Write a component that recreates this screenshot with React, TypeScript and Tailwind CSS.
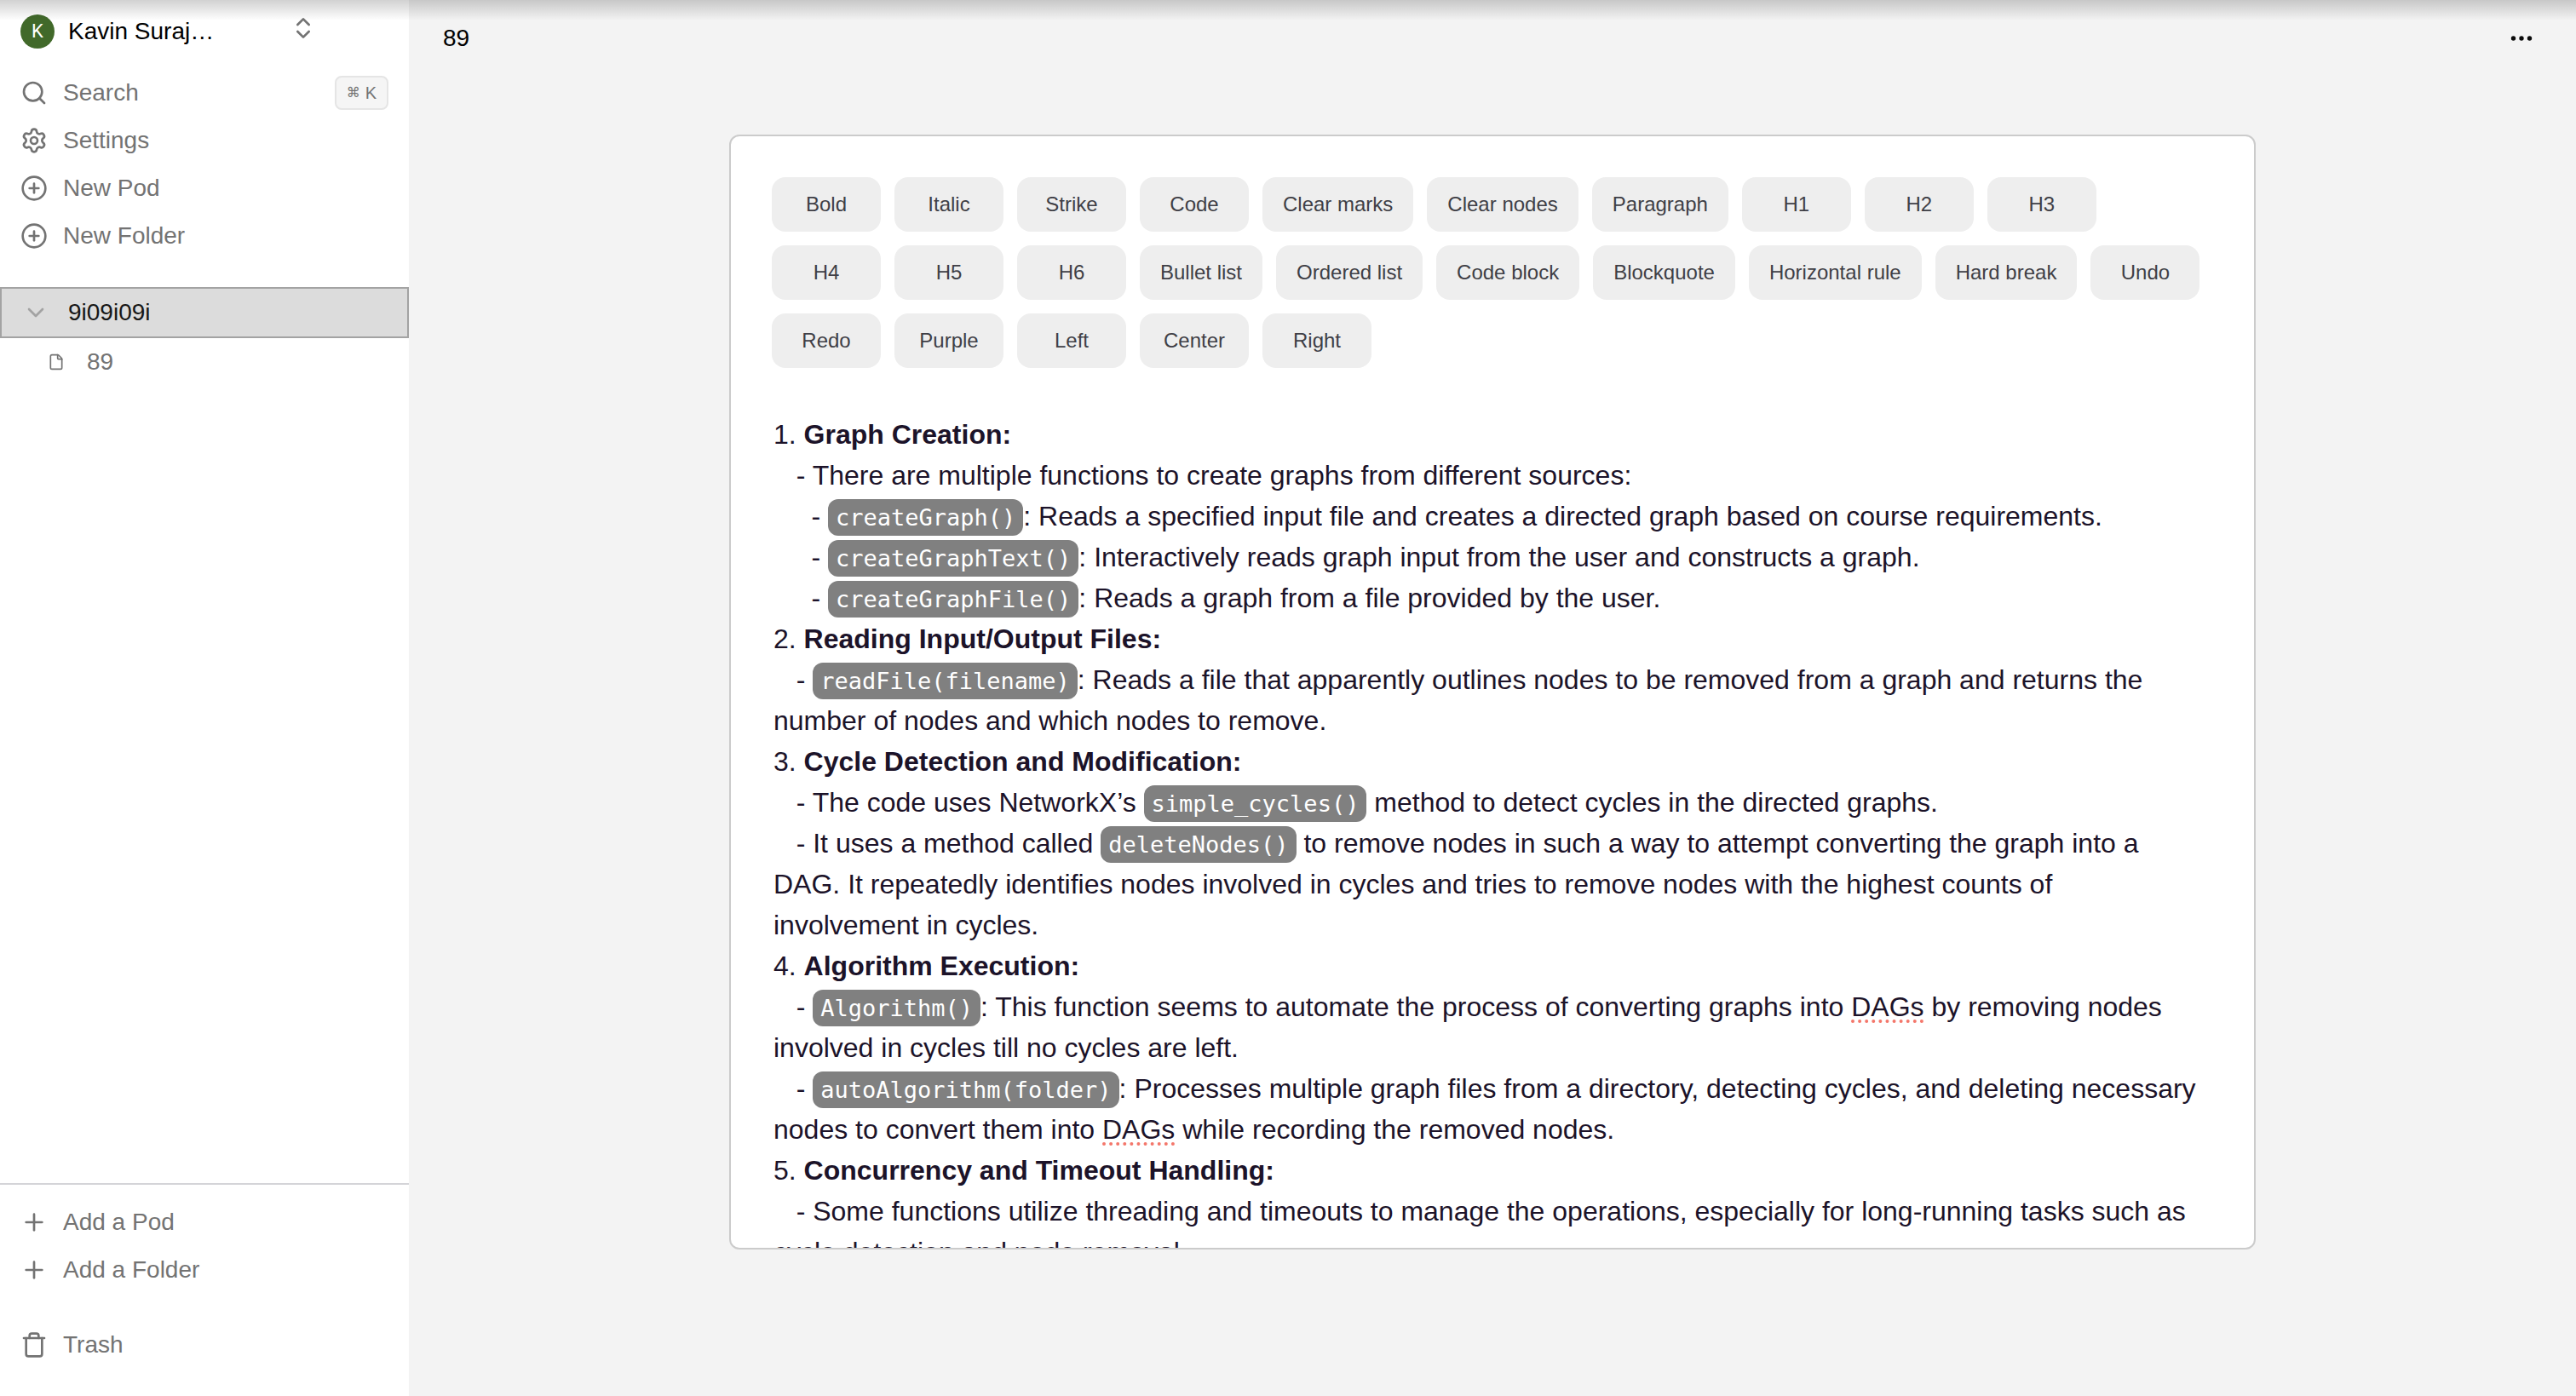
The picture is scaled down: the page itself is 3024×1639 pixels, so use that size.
import type { ReactNode } from "react";
import { CirclePlus, Plus, Search, Settings, Trash, ChevronDown, ChevronsUpDown, File } from "lucide-react";

const tools = ["Bold", "Italic", "Strike", "Code", "Clear marks", "Clear nodes", "Paragraph", "H1", "H2", "H3", "H4", "H5", "H6", "Bullet list", "Ordered list", "Code block", "Blockquote", "Horizontal rule", "Hard break", "Undo", "Redo", "Purple", "Left", "Center", "Right"];

function Item({ icon, label, children }: { icon: ReactNode; label: string; children?: ReactNode }) {
  return (
    <button type="button" className="flex h-14 w-full items-center pl-6 pr-6 text-left text-[#737373]">
      <span className="mr-4 flex w-8 shrink-0 justify-center">{icon}</span>
      <span className="flex-1 pl-0.5">{label}</span>
      {children}
    </button>
  );
}

function Code({ children }: { children: ReactNode }) {
  return (
    <code className="rounded-xl bg-[#808080] px-[9px] py-1.5 font-['DejaVu_Sans_Mono',monospace] text-[27px] leading-none text-white">{children}</code>
  );
}

function Misspelt({ children }: { children: ReactNode }) {
  return (
    <span className="underline decoration-[#f4776b] decoration-dotted decoration-4 underline-offset-4">{children}</span>
  );
}

export default function App() {
  return (
    <div className="relative flex h-screen overflow-hidden bg-[#f3f3f3] font-['Liberation_Sans',Arial,sans-serif] text-[28px] leading-10 text-black">
      <aside className="flex w-[480px] shrink-0 flex-col bg-white">
        <button type="button" className="flex h-[73px] items-center pl-6 text-left">
          <span className="flex size-10 items-center justify-center rounded-full bg-[#41692a] font-[Roboto,sans-serif] text-[22px] text-white">K</span>
          <span className="w-[230px] pl-4">Kavin Suraj…</span>
          <ChevronsUpDown className="mb-2 ml-[46px] size-8 text-[#737373]" strokeWidth={2} />
        </button>
        <nav className="pt-2">
          <Item icon={<Search className="size-8" />} label="Search">
            <kbd className="flex h-10 items-center gap-1.5 rounded-lg border-2 border-[#e5e5e5] bg-[#f5f5f5] px-3 font-['Liberation_Sans',sans-serif] text-[20px]">
              <span className="font-['DejaVu_Sans',sans-serif] text-[16px]">⌘</span>K
            </kbd>
          </Item>
          <Item icon={<Settings className="size-8" />} label="Settings" />
          <Item icon={<CirclePlus className="size-8" />} label="New Pod" />
          <Item icon={<CirclePlus className="size-8" />} label="New Folder" />
        </nav>
        <div className="mt-8">
          <button type="button" className="flex h-[60px] w-full items-center border-2 border-[#a3a3a3] bg-[#dcdcdc] pl-6 text-left text-[#171717]">
            <ChevronDown className="size-8 text-[#a3a3a3]" />
            <span className="pl-[22px]">9i09i09i</span>
          </button>
          <button type="button" className="flex h-14 w-full items-center pl-14 text-left text-[#737373]">
            <File className="size-5" />
            <span className="pl-[26px]">89</span>
          </button>
        </div>
        <div className="mt-auto border-t-2 border-[#d4d4d8] pt-4 pb-8">
          <Item icon={<Plus className="size-8" />} label="Add a Pod" />
          <Item icon={<Plus className="size-8" />} label="Add a Folder" />
          <div className="mt-8">
            <Item icon={<Trash className="size-8" />} label="Trash" />
          </div>
        </div>
      </aside>
      <main className="flex min-w-0 flex-1 flex-col">
        <header className="flex h-[90px] items-center justify-between px-10">
          <h1>89</h1>
          <button type="button" aria-label="More" className="mr-2">
            <svg viewBox="0 0 32 8" className="h-2 w-8 fill-[#0a0a0a]">
              <circle cx="6.5" cy="4" r="2.7" />
              <circle cx="16" cy="4" r="2.7" />
              <circle cx="25.5" cy="4" r="2.7" />
            </svg>
          </button>
        </header>
        <div className="mx-auto mt-17 mb-43 min-h-0 w-full max-w-[1792px] flex-1 overflow-hidden rounded-xl border-2 border-[#cbcbcb] bg-white p-12">
          <div className="flex flex-wrap gap-4">
            {tools.map((t) => (
              <button key={t} type="button" className="h-16 min-w-32 rounded-2xl bg-[#eeeeee] px-6 text-2xl text-[#3f3f46]">{t}</button>
            ))}
          </div>
          <div className="mt-[54px] whitespace-pre-wrap pr-4 pl-0.5 text-[32px] leading-[48px] text-[#1c1329]">
            <p>1. <strong>Graph Creation:</strong></p>
            <p>{"   - There are multiple functions to create graphs from different sources:"}</p>
            <p>{"     - "}<Code>createGraph()</Code>: Reads a specified input file and creates a directed graph based on course requirements.</p>
            <p>{"     - "}<Code>createGraphText()</Code>: Interactively reads graph input from the user and constructs a graph.</p>
            <p>{"     - "}<Code>createGraphFile()</Code>: Reads a graph from a file provided by the user.</p>
            <p>2. <strong>Reading Input/Output Files:</strong></p>
            <p>{"   - "}<Code>readFile(filename)</Code>: Reads a file that apparently outlines nodes to be removed from a graph and returns the number of nodes and which nodes to remove.</p>
            <p>3. <strong>Cycle Detection and Modification:</strong></p>
            <p>{"   - The code uses NetworkX’s "}<Code>simple_cycles()</Code> method to detect cycles in the directed graphs.</p>
            <p>{"   - It uses a method called "}<Code>deleteNodes()</Code> to remove nodes in such a way to attempt converting the graph into a DAG. It repeatedly identifies nodes involved in cycles and tries to remove nodes with the highest counts of involvement in cycles.</p>
            <p>4. <strong>Algorithm Execution:</strong></p>
            <p>{"   - "}<Code>Algorithm()</Code>: This function seems to automate the process of converting graphs into <Misspelt>DAGs</Misspelt> by removing nodes involved in cycles till no cycles are left.</p>
            <p>{"   - "}<Code>autoAlgorithm(folder)</Code>: Processes multiple graph files from a directory, detecting cycles, and deleting necessary nodes to convert them into <Misspelt>DAGs</Misspelt> while recording the removed nodes.</p>
            <p>5. <strong>Concurrency and Timeout Handling:</strong></p>
            <p>{"   - Some functions utilize threading and timeouts to manage the operations, especially for long-running tasks such as cycle detection and node removal."}</p>
          </div>
        </div>
      </main>
      <div className="pointer-events-none absolute inset-x-0 top-0 h-6 bg-linear-to-b from-black/18 to-transparent" />
    </div>
  );
}
